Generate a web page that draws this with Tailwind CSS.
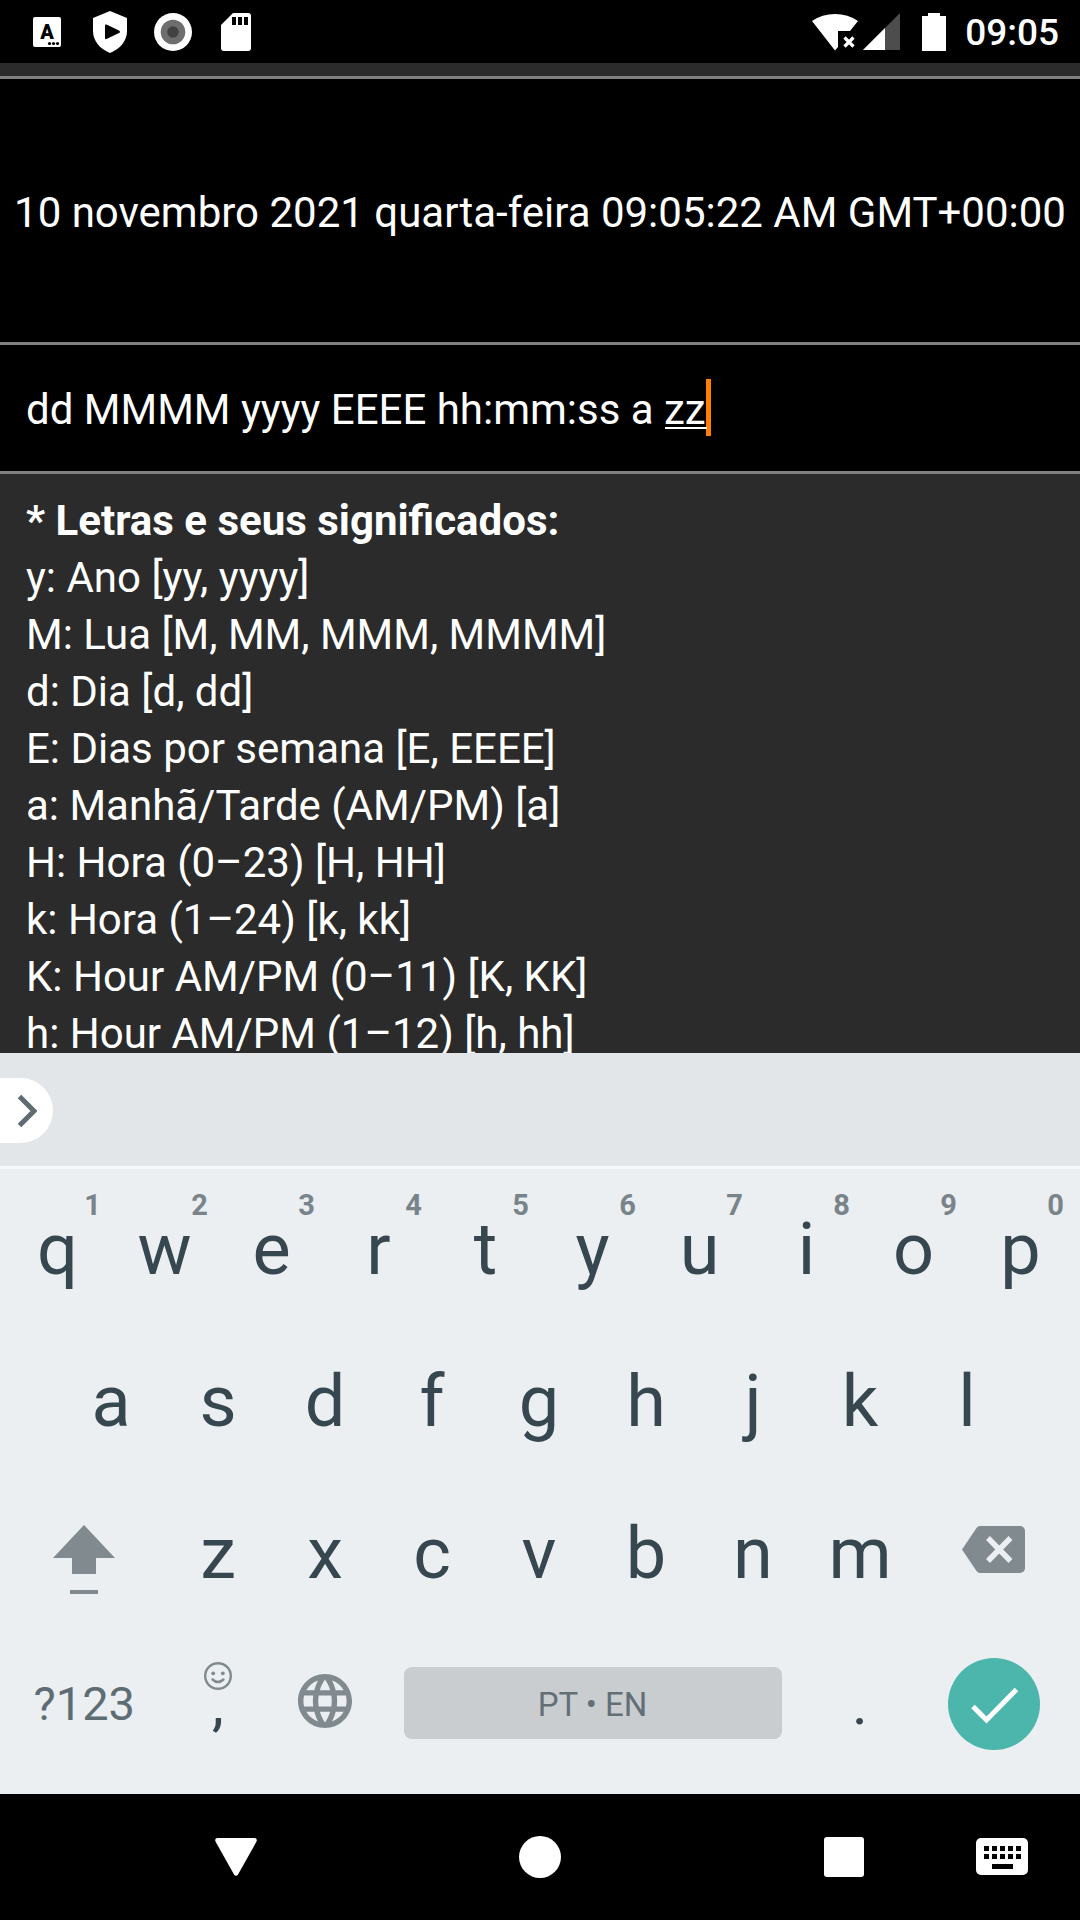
<!DOCTYPE html>
<html lang="pt">
<head>
<meta charset="utf-8">
<meta name="viewport" content="width=device-width, initial-scale=1">
<title>Formato de data</title>
<script src="https://cdn.jsdelivr.net/npm/@tailwindcss/browser@4"></script>
</head>
<body class="flex h-screen flex-col overflow-hidden bg-[#2b2b2b] font-[Roboto,sans-serif] text-white">

<!-- Status bar -->
<header class="flex h-[63px] shrink-0 items-center justify-between bg-black pr-[21px] pl-8">
  <div class="flex items-center gap-[31px]">
    <svg class="h-8 w-[30px]" viewBox="0 0 30 32" aria-hidden="true">
      <rect x="1" y="1" width="28" height="30" rx="2" fill="#fff"/>
      <text x="15" y="23" text-anchor="middle" font-size="20" class="font-black" fill="#000">A</text>
      <circle cx="17.500" cy="27.500" r="1.600"/><circle cx="21.500" cy="27.500" r="1.600"/><circle cx="25.500" cy="27.500" r="1.600"/>
    </svg>
    <svg class="h-[42px] w-[34px]" viewBox="0 0 34 42" aria-hidden="true">
      <path d="M17 0L34 7v13c0 10-7 18-17 22C7 38 0 30 0 20V7z" fill="#fff"/>
      <path d="M12 14.500q0-1.500 1.500-1L26 19.500q2 1.500 0 2.500L13.500 28q-1.500 .5-1.500-1z" fill="#000"/>
    </svg>
    <svg class="h-[38px] w-[38px] -ml-1" viewBox="0 0 38 38" aria-hidden="true">
      <circle cx="19" cy="19" r="19" fill="#fff"/><circle cx="19" cy="19" r="12.300" fill="#6e6e6e"/><circle cx="19" cy="19" r="5.800" fill="#424242"/>
    </svg>
    <svg class="h-[38px] w-[30px] -ml-0.5" viewBox="0 0 30 38" aria-hidden="true">
      <path d="M12 0h15a3 3 0 0 1 3 3v32a3 3 0 0 1-3 3H3a3 3 0 0 1-3-3V12z" fill="#fff"/>
      <path d="M11 4h4v8h-4zM17 4h4v8h-4zM23 4h4v8h-4z" fill="#000"/>
    </svg>
  </div>
  <div class="flex items-center">
    <svg class="h-[38px] w-[46px]" viewBox="0 0 46 38" aria-hidden="true">
      <path d="M0 8Q10 1 23 1T46 8L38 18H26V34L23 37.500z" fill="#fff"/>
      <path d="M32.500 24.500l9 9M41.500 24.500l-9 9" stroke="#fff" stroke-width="3.200"/>
    </svg>
    <svg class="ml-[5px] h-[38px] w-[37px]" viewBox="0 0 37 38" aria-hidden="true">
      <path d="M37 0v37H0z" fill="#4d4d4d"/><path d="M22 15v22H0z" fill="#fff"/>
    </svg>
    <svg class="ml-[22px] h-[38px] w-6" viewBox="0 0 24 38" aria-hidden="true">
      <path d="M6 0h12v3h6v35H0V3h6z" fill="#fff"/>
    </svg>
    <time class="ml-[19px] pt-[3px] text-[37px] leading-[48px] font-medium">09:05</time>
  </div>
</header>

<main class="mt-[13px] flex min-h-0 flex-1 flex-col text-[42px] leading-[57px]">
  <output for="pattern" class="flex h-[269px] shrink-0 items-center justify-center border-y-3 border-[#808080] bg-black pt-1 whitespace-nowrap">10 novembro 2021 quarta-feira 09:05:22 AM GMT+00:00</output>

  <div class="flex h-[129px] shrink-0 items-start border-b-3 border-[#808080] bg-black px-[26px] pt-[34px]">
    <div class="relative flex">
      <input id="pattern" type="text" aria-label="Formato" value="dd MMMM yyyy EEEE hh:mm:ss a zz" class="field-sizing-content h-[57px] bg-transparent pt-1 outline-none">
      <!-- composing underline and caret -->
      <span class="absolute right-1 bottom-[7px] h-[2px] w-[42px] bg-white"></span>
      <span class="h-[57px] w-[5px] bg-[#ff8000]"></span>
    </div>
  </div>

  <section class="min-h-0 flex-1 overflow-hidden px-[26px] pt-[18px]">
    <h1 class="font-bold">* Letras e seus significados:</h1>
    <ul>
      <li>y: Ano [yy, yyyy]</li>
      <li>M: Lua [M, MM, MMM, MMMM]</li>
      <li>d: Dia [d, dd]</li>
      <li>E: Dias por semana [E, EEEE]</li>
      <li>a: Manhã/Tarde (AM/PM) [a]</li>
      <li>H: Hora (0–23) [H, HH]</li>
      <li>k: Hora (1–24) [k, kk]</li>
      <li>K: Hour AM/PM (0–11) [K, KK]</li>
      <li>h: Hour AM/PM (1–12) [h, hh]</li>
    </ul>
  </section>
</main>

<!-- On-screen keyboard -->
<section aria-label="Teclado" class="shrink-0 bg-[#ebeff2] text-[#37474f]">
  <div class="flex h-[116px] items-center border-b-3 border-[#f5f8fa] bg-[#e2e6e9]">
    <button aria-label="Expandir" class="mt-0.5 flex h-[65px] w-[53px] items-center rounded-r-full bg-white pl-[17px]">
      <svg class="h-8 w-5" viewBox="0 0 20 32" fill="none" stroke="#5f6d73" stroke-width="5" aria-hidden="true"><path d="M2.500 1.500L17 16 2.500 30.500"/></svg>
    </button>
  </div>

  <div class="pt-[3px] pr-1.5 pb-[14px] pl-1 text-[72px] leading-[84px]">
    <div class="grid h-[152px] grid-cols-10">
      <button class="relative pt-1">q<span class="absolute top-4 right-[10px] text-[29px] leading-[34px] font-bold text-[#78848a]">1</span></button>
      <button class="relative pt-1">w<span class="absolute top-4 right-[10px] text-[29px] leading-[34px] font-bold text-[#78848a]">2</span></button>
      <button class="relative pt-1">e<span class="absolute top-4 right-[10px] text-[29px] leading-[34px] font-bold text-[#78848a]">3</span></button>
      <button class="relative pt-1">r<span class="absolute top-4 right-[10px] text-[29px] leading-[34px] font-bold text-[#78848a]">4</span></button>
      <button class="relative pt-1">t<span class="absolute top-4 right-[10px] text-[29px] leading-[34px] font-bold text-[#78848a]">5</span></button>
      <button class="relative pt-1">y<span class="absolute top-4 right-[10px] text-[29px] leading-[34px] font-bold text-[#78848a]">6</span></button>
      <button class="relative pt-1">u<span class="absolute top-4 right-[10px] text-[29px] leading-[34px] font-bold text-[#78848a]">7</span></button>
      <button class="relative pt-1">i<span class="absolute top-4 right-[10px] text-[29px] leading-[34px] font-bold text-[#78848a]">8</span></button>
      <button class="relative pt-1">o<span class="absolute top-4 right-[10px] text-[29px] leading-[34px] font-bold text-[#78848a]">9</span></button>
      <button class="relative pt-1">p<span class="absolute top-4 right-[10px] text-[29px] leading-[34px] font-bold text-[#78848a]">0</span></button>
    </div>
    <div class="grid h-[152px] grid-cols-[repeat(20,minmax(0,1fr))]">
      <button class="col-span-2 col-start-2 pt-1">a</button>
      <button class="col-span-2 pt-1">s</button>
      <button class="col-span-2 pt-1">d</button>
      <button class="col-span-2 pt-1">f</button>
      <button class="col-span-2 pt-1">g</button>
      <button class="col-span-2 pt-1">h</button>
      <button class="col-span-2 pt-1">j</button>
      <button class="col-span-2 pt-1">k</button>
      <button class="col-span-2 pt-1">l</button>
    </div>
    <div class="grid h-[152px] grid-cols-[repeat(20,minmax(0,1fr))]">
      <button aria-label="Shift" class="col-span-3 flex items-center justify-center">
        <svg class="h-[84px] w-[62px]" viewBox="0 0 62 84" fill="#808a8f" aria-hidden="true"><path d="M31 15L62 48H43V64H19V48H0zM17 80h28v4H17z"/></svg>
      </button>
      <button class="col-span-2 pt-1">z</button>
      <button class="col-span-2 pt-1">x</button>
      <button class="col-span-2 pt-1">c</button>
      <button class="col-span-2 pt-1">v</button>
      <button class="col-span-2 pt-1">b</button>
      <button class="col-span-2 pt-1">n</button>
      <button class="col-span-2 pt-1">m</button>
      <button aria-label="Apagar" class="col-span-3 flex items-center justify-center">
        <svg class="h-[52px] w-[63px]" viewBox="0 0 63 52" aria-hidden="true">
          <path d="M18 0H58a5 5 0 0 1 5 5V42a5 5 0 0 1-5 5H18q-2 0-3.500-2L0 23.500 14.500 2q1.500-2 3.500-2z" fill="#808a8f"/>
          <path d="M26 12L48.500 35M48.500 12L26 35" stroke="#ebeff2" stroke-width="5.500"/>
        </svg>
      </button>
    </div>
    <div class="grid h-[152px] grid-cols-[repeat(20,minmax(0,1fr))]">
      <button class="col-span-3 text-[47px] text-[#5e6d73]">?123</button>
      <button class="relative col-span-2 text-6xl">,<svg class="absolute inset-x-0 top-[34px] mx-auto size-7" viewBox="0 0 28 28" fill="none" stroke="#808a8f" stroke-width="2.400" aria-hidden="true"><circle cx="14" cy="14" r="12.800"/><path d="M8.500 17.500q5.500 5 11 0" stroke-linecap="round"/><circle cx="9.200" cy="11.300" r="1.900" fill="#808a8f" stroke="none"/><circle cx="18.800" cy="11.300" r="1.900" fill="#808a8f" stroke="none"/></svg></button>
      <button aria-label="Idioma" class="col-span-2 flex items-center justify-center pb-[6px]">
        <svg class="size-[54px]" viewBox="2 2 20 20" fill="#808a8f" aria-hidden="true"><path d="M11.990 2C6.470 2 2 6.480 2 12s4.470 10 9.990 10C17.520 22 22 17.520 22 12S17.520 2 11.990 2zm6.930 6h-2.950c-.32-1.250-.78-2.450-1.380-3.560 1.840.63 3.370 1.910 4.330 3.560zM12 4.040c.83 1.200 1.480 2.530 1.910 3.960h-3.820c.43-1.430 1.080-2.760 1.910-3.960zM4.260 14C4.100 13.360 4 12.690 4 12s.1-1.360.26-2h3.380c-.08.66-.14 1.320-.14 2s.06 1.340.14 2H4.260zm.82 2h2.950c.32 1.250.78 2.450 1.380 3.560-1.840-.63-3.370-1.900-4.330-3.560zm2.950-8H5.080c.96-1.660 2.490-2.930 4.330-3.560C8.810 5.550 8.350 6.750 8.030 8zM12 19.960c-.83-1.200-1.480-2.530-1.910-3.960h3.820c-.43 1.430-1.080 2.760-1.910 3.960zM14.340 14H9.660c-.09-.66-.16-1.320-.16-2s.07-1.350.16-2h4.680c.09.65.16 1.320.16 2s-.07 1.340-.16 2zm.25 5.560c.6-1.110 1.060-2.310 1.380-3.560h2.950c-.96 1.650-2.490 2.930-4.330 3.560zM16.360 14c.08-.66.14-1.320.14-2s-.06-1.340-.14-2h3.380c.16.64.26 1.310.26 2s-.1 1.360-.26 2h-3.380z"/></svg>
      </button>
      <button class="col-span-8 mx-[25px] mb-0.5 h-[72px] self-center rounded-lg bg-[#c9cdcf] pt-1 text-[33px] leading-10 text-[#626f77]">PT • EN</button>
      <button class="col-span-2 text-6xl">.</button>
      <button aria-label="Concluir" class="col-span-3 flex size-[92px] items-center justify-center self-center justify-self-center rounded-full bg-[#4db6ac]">
        <svg class="size-[92px]" viewBox="0 0 92 92" fill="none" stroke="#fff" stroke-width="5" aria-hidden="true"><path d="M25 48.500L38.500 62 68.500 31.500"/></svg>
      </button>
    </div>
  </div>
</section>

<!-- Navigation bar -->
<nav class="grid h-[126px] shrink-0 grid-cols-[164fr_144fr_160fr_144fr_160fr_144fr_14fr_144fr_6fr] bg-black">
  <button aria-label="Voltar" class="col-start-2 flex items-center justify-center">
    <svg class="h-[38px] w-[42px]" viewBox="0 0 42 38" fill="#fff" aria-hidden="true"><path d="M2 0H40q2.500 .5 1.500 3.500L23 36.500q-2 2.500-4 0L.5 3.500Q-.5 .5 2 0z"/></svg>
  </button>
  <button aria-label="Início" class="col-start-4 flex items-center justify-center"><span class="size-[42px] rounded-full bg-white"></span></button>
  <button aria-label="Recentes" class="col-start-6 flex items-center justify-center"><span class="size-10 rounded-[3px] bg-white"></span></button>
  <button aria-label="Trocar teclado" class="col-start-8 flex items-center justify-center">
    <svg class="h-[38px] w-[52px]" viewBox="0 0 52 38" aria-hidden="true">
      <rect width="52" height="37" rx="5" fill="#fff"/>
      <path d="M8 8h5v5H8zM16 8h5v5h-5zM24 8h5v5h-5zM32 8h5v5h-5zM40 8h5v5h-5zM8 16h5v5H8zM16 16h5v5h-5zM24 16h5v5h-5zM32 16h5v5h-5zM40 16h5v5h-5zM16 26h21v5H16z"/>
    </svg>
  </button>
</nav>
</body>
</html>
